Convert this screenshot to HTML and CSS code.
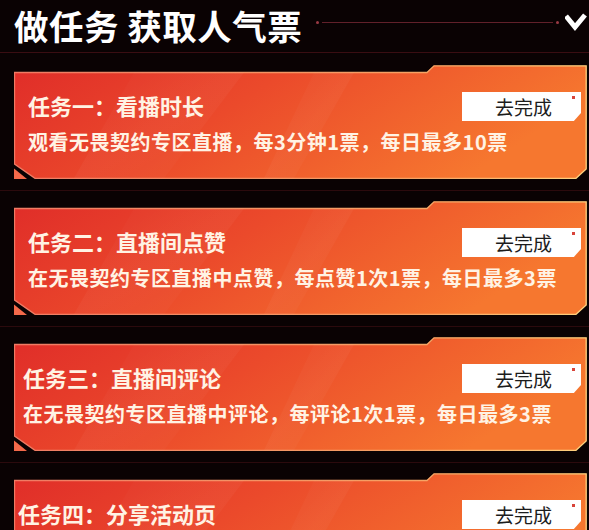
FILE: index.html
```html
<!DOCTYPE html>
<html lang="zh">
<head>
<meta charset="utf-8">
<title>做任务 获取人气票</title>
<link rel="stylesheet" href="styles.css">
</head>
<body>
<div class="page">
  <header class="header">
    <h1 class="header-title">做任务 获取人气票</h1>
    <div class="header-line"><span class="dot"></span><span class="rule"></span><span class="dot"></span></div>
    <svg class="chevron" width="24" height="22" viewBox="0 0 24 22"><polyline points="1,6 10,17 20,5" fill="none" stroke="#fff" stroke-width="5" stroke-linejoin="miter"/></svg>
  </header>
  <div class="sep"></div>

  <div class="list">
    <div class="card">
      <svg class="card-bg" viewBox="0 0 573 114" preserveAspectRatio="none"><use href="#cardshape"/></svg>
      <div class="card-body">
        <div class="card-head">
          <div class="card-title">任务一：看播时长</div>
          <button class="btn">去完成<span class="btn-dot"></span></button>
        </div>
        <div class="card-desc">观看无畏契约专区直播，每3分钟1票，每日最多10票</div>
      </div>
    </div>
    <div class="divider"></div>
    <div class="card">
      <svg class="card-bg" viewBox="0 0 573 114" preserveAspectRatio="none"><use href="#cardshape"/></svg>
      <div class="card-body">
        <div class="card-head">
          <div class="card-title">任务二：直播间点赞</div>
          <button class="btn">去完成<span class="btn-dot"></span></button>
        </div>
        <div class="card-desc">在无畏契约专区直播中点赞，每点赞1次1票，每日最多3票</div>
      </div>
    </div>
    <div class="divider"></div>
    <div class="card card-shift1">
      <svg class="card-bg" viewBox="0 0 573 114" preserveAspectRatio="none"><use href="#cardshape"/></svg>
      <div class="card-body">
        <div class="card-head">
          <div class="card-title">任务三：直播间评论</div>
          <button class="btn">去完成<span class="btn-dot"></span></button>
        </div>
        <div class="card-desc">在无畏契约专区直播中评论，每评论1次1票，每日最多3票</div>
      </div>
    </div>
    <div class="divider"></div>
    <div class="card card-shift2">
      <svg class="card-bg" viewBox="0 0 573 114" preserveAspectRatio="none"><use href="#cardshape"/></svg>
      <div class="card-body">
        <div class="card-head">
          <div class="card-title">任务四：分享活动页</div>
          <button class="btn">去完成<span class="btn-dot"></span></button>
        </div>
      </div>
    </div>
  </div>
</div>

<svg width="0" height="0" class="defs">
  <defs>
    <linearGradient id="cardfill" x1="0" y1="0" x2="1" y2="0.3">
      <stop offset="0" stop-color="#e02d29"/>
      <stop offset="0.45" stop-color="#eb4a2b"/>
      <stop offset="1" stop-color="#f6772f"/>
    </linearGradient>
    <linearGradient id="cardstroke" x1="0" y1="0" x2="1" y2="0">
      <stop offset="0" stop-color="#f07a64"/>
      <stop offset="0.7" stop-color="#f6a263"/>
      <stop offset="1" stop-color="#ffd27e"/>
    </linearGradient>
    <linearGradient id="streak" x1="0" y1="0" x2="1" y2="1">
      <stop offset="0" stop-color="#ffffff" stop-opacity="0"/>
      <stop offset="0.5" stop-color="#ffffff" stop-opacity="0.035"/>
      <stop offset="1" stop-color="#ffffff" stop-opacity="0"/>
    </linearGradient>
    <g id="cardshape">
      <polygon points="0.5,7.5 413,7.5 420,0.8 572.2,0.8 572.2,104 562,113.3 21,113.3 0.5,99" fill="url(#cardfill)" stroke="url(#cardstroke)" stroke-width="1.3"/>
      <polygon points="120,7.5 230,7.5 150,113.3 60,113.3" fill="url(#streak)"/>
      <polygon points="300,7.5 340,7.5 280,113.3 250,113.3" fill="url(#streak)"/>
      <polygon points="0,103.5 0,114 13,114" fill="#f4694a"/>
    </g>
  </defs>
</svg>
</body>
</html>
```

FILE: styles.css
```css
* { box-sizing: border-box; }
html, body {
  margin: 0;
  padding: 0;
  background: #0a0203;
}
body {
  width: 589px;
  height: 530px;
  overflow: hidden;
  font-family: "Noto Sans CJK SC", "Noto Sans", sans-serif;
  color: #fff5e8;
}
.defs { position: absolute; }
.page { width: 589px; }

.header {
  height: 52px;
  display: flex;
  align-items: center;
  padding: 0 0 6px 14px;
}
.header-title {
  align-self: flex-start;
  margin: 0;
  font-size: 34.5px;
  line-height: 50px;
  font-weight: 700;
  color: #ffffff;
  letter-spacing: 0.5px;
  white-space: nowrap;
}
.header-line {
  display: flex;
  align-items: center;
  margin-left: 14px;
  width: 246px;
  height: 4px;
  margin-top: -2px;
}
.header-line .dot {
  width: 3px;
  height: 3px;
  border-radius: 50%;
  background: #9a3a44;
  flex: none;
}
.header-line .rule {
  flex: 1;
  height: 1px;
  margin: 0 3px;
  background: #62202a;
}
.chevron {
  margin-left: 6px;
  margin-top: -4px;
  flex: none;
}

.sep {
  height: 1px;
  background: #3a0d12;
}

.list {
  padding-top: 12px;
}
.divider {
  height: 1px;
  margin: 11px 0 10px;
  background: #2c0a0d;
}

.card {
  position: relative;
  height: 114px;
  width: 573px;
  margin-left: 14px;
}
.card-bg {
  position: absolute;
  left: 0;
  top: 0;
  width: 573px;
  height: 114px;
}
.card-body {
  position: relative;
  padding: 27px 6px 0 14px;
}
.card-shift1 .card-body { padding-left: 9px; }
.card-shift2 .card-body { padding-left: 4px; }

.card-head {
  display: flex;
  justify-content: space-between;
  align-items: flex-start;
}
.card-title {
  font-size: 22px;
  line-height: 26px;
  font-weight: 700;
  color: #fff3e4;
  white-space: nowrap;
}
.card-desc {
  margin-top: 7px;
  font-size: 20px;
  line-height: 28px;
  font-weight: 700;
  color: #fff3e4;
  white-space: nowrap;
  letter-spacing: 0.5px;
}

.btn {
  position: relative;
  width: 119px;
  height: 29px;
  border: none;
  padding: 0 0 0 4px;
  background: #ffffff;
  clip-path: polygon(0 0, 100% 0, 100% 72%, 94% 100%, 0 100%);
  font-family: "Noto Sans CJK SC", "Noto Sans", sans-serif;
  font-size: 19px;
  line-height: 29px;
  color: #1c1c1c;
  font-weight: 400;
}
.btn-dot {
  position: absolute;
  right: 6px;
  top: 4px;
  width: 3px;
  height: 3px;
  background: #d8443a;
}
```
